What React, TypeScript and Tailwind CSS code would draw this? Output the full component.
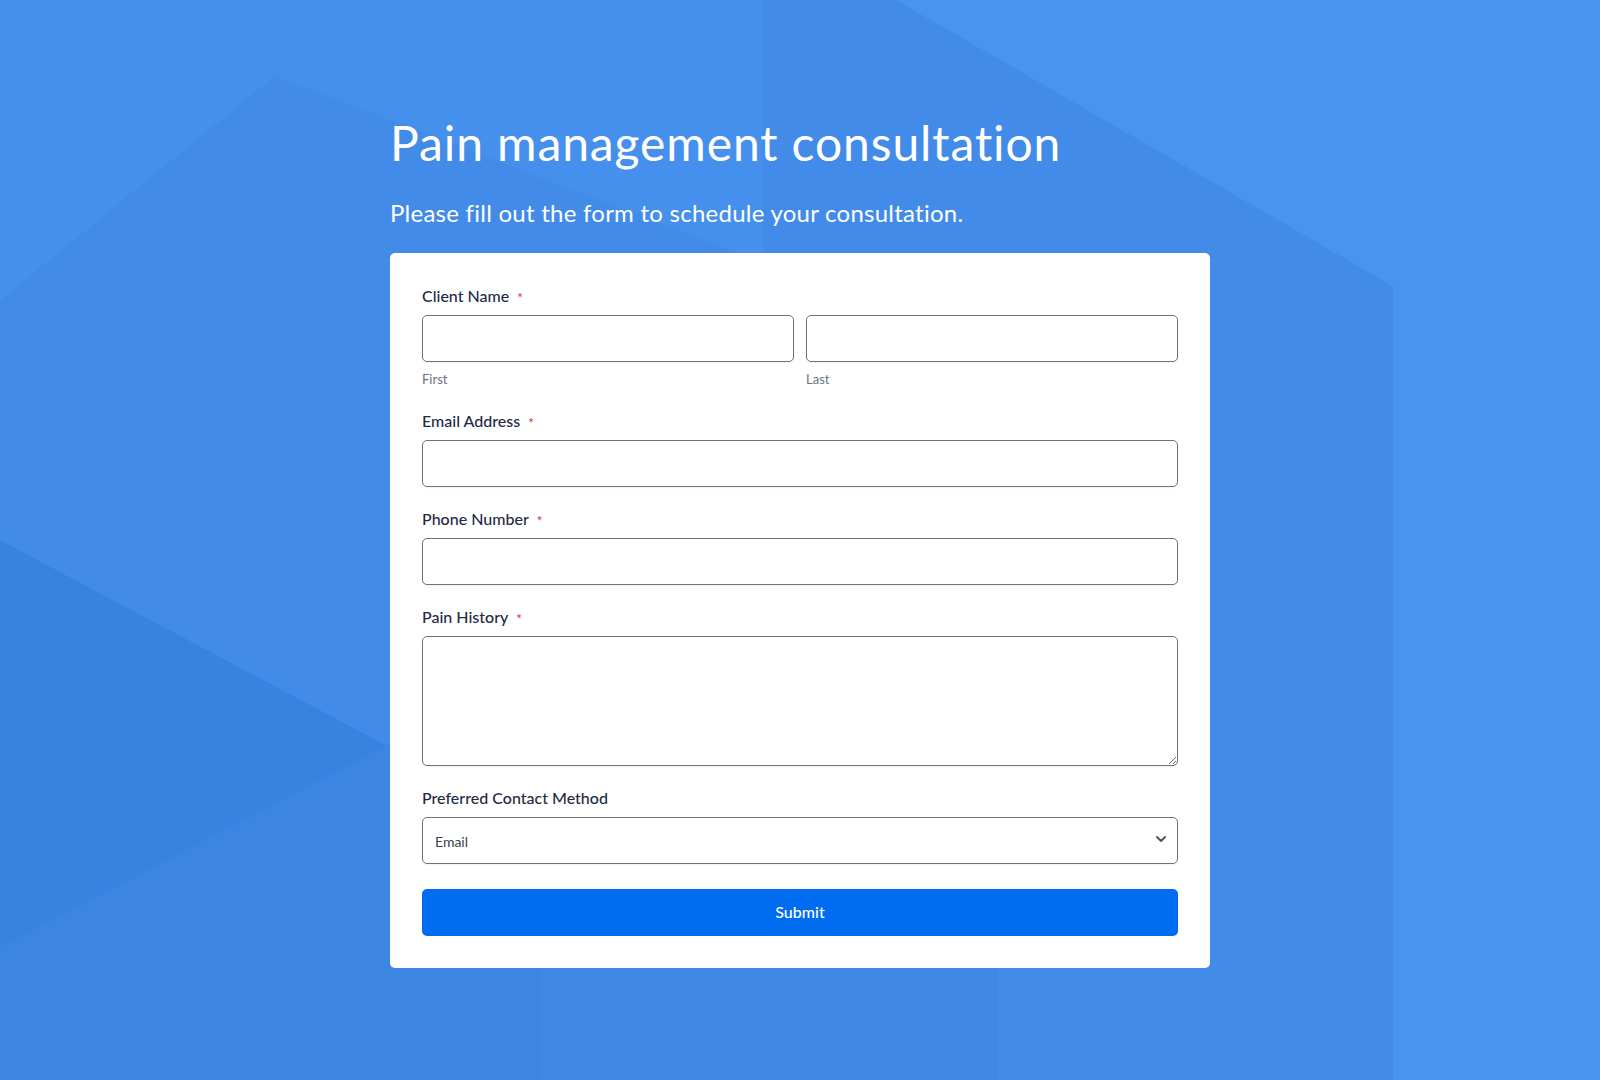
import { useState } from "react";

function Backdrop() {
  return (
    <svg
      className="absolute inset-0 h-full w-full"
      viewBox="0 0 1600 1080"
      preserveAspectRatio="none"
      aria-hidden="true"
    >
      <rect width="1600" height="1080" fill="#428BE9" />
      <polygon points="0,0 763,0 763,262 275,76 0,300" fill="#4690ED" />
      <polygon points="896,0 1600,0 1600,1080 1393,1080 1393,286" fill="#4A94F1" />
      <polygon points="0,540 390,747 0,947" fill="#3882E0" />
      <polygon points="0,947 390,743 390,1080 0,1080" fill="#3C85E3" />
      <polygon points="390,967 541,967 541,1080 390,1080" fill="#3C85E3" />
      <polygon points="541,967 998,967 998,1080 541,1080" fill="#3F88E6" />
    </svg>
  );
}

function Label({ text, required }: { text: string; required?: boolean }) {
  return (
    <label className="mb-[7px] flex h-6 items-center text-[16px] font-medium text-[#1F2A44]">
      {text}
      {required && (
        <span className="relative top-[3px] ml-[8px] text-[13px] leading-none text-[#E03131]">*</span>
      )}
    </label>
  );
}

const inputClass =
  "block h-[47px] w-full rounded-[5px] border border-[#6B7280] bg-white px-3 text-[14px] text-[#374151] shadow-[0_1px_2px_rgba(0,0,0,0.06)] outline-none";

export default function App() {
  const [contact, setContact] = useState("Email");

  return (
    <main className="relative min-h-screen overflow-hidden font-['Lato',sans-serif] [font-variant-ligatures:none]">
      <Backdrop />

      <div className="relative mx-auto w-[820px] pt-[114px] pb-[113px]">
        <h1 className="text-[48px] leading-[1.2] font-normal tracking-[0.9px] text-white">
          Pain management consultation
        </h1>
        <p className="mt-[23px] text-[24px] leading-[36px] tracking-[0.25px] text-white">
          Please fill out the form to schedule your consultation.
        </p>

        <form
          onSubmit={(event) => event.preventDefault()}
          className="mt-[22px] rounded-[5px] bg-white px-8 pt-[31px] pb-8"
        >
          <div>
            <Label text="Client Name" required />
            <div className="grid grid-cols-2 gap-3">
              <div>
                <input className={inputClass} />
                <p className="mt-[9px] text-[13px] leading-4 text-[#6B7280]">First</p>
              </div>
              <div>
                <input className={inputClass} />
                <p className="mt-[9px] text-[13px] leading-4 text-[#6B7280]">Last</p>
              </div>
            </div>
          </div>

          <div className="mt-[22px]">
            <Label text="Email Address" required />
            <input type="email" className={inputClass} />
          </div>

          <div className="mt-5">
            <Label text="Phone Number" required />
            <input type="tel" className={inputClass} />
          </div>

          <div className="mt-5">
            <Label text="Pain History" required />
            <textarea className="block h-[130px] w-full rounded-[5px] border border-[#6B7280] bg-white px-3 py-2 text-[14px] text-[#374151] shadow-[0_1px_2px_rgba(0,0,0,0.06)] outline-none" />
          </div>

          <div className="mt-5">
            <Label text="Preferred Contact Method" />
            <div className="relative">
              <select
                value={contact}
                onChange={(event) => setContact(event.target.value)}
                className={inputClass + " appearance-none pt-[2px]"}
              >
                <option>Email</option>
                <option>Phone</option>
              </select>
              <svg
                className="pointer-events-none absolute top-[17px] right-[11px] h-[10px] w-[12px]"
                viewBox="0 0 12 10"
                fill="none"
                stroke="#4B5563"
                strokeWidth="2"
                strokeLinecap="round"
                strokeLinejoin="round"
              >
                <path d="M2 3l4 4 4-4" />
              </svg>
            </div>
          </div>

          <button
            type="submit"
            className="mt-[25px] block h-[47px] w-full rounded-[5px] bg-[#006DF0] text-[16px] font-medium text-white"
          >
            Submit
          </button>
        </form>
      </div>
    </main>
  );
}
